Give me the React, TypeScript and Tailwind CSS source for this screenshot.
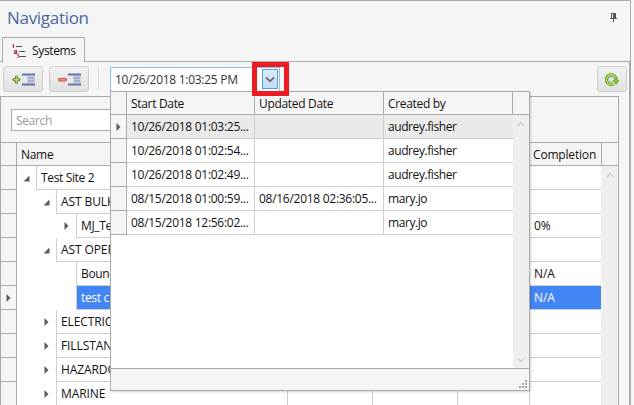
import React from 'react';

const treeRows = [
  { level: 1, label: 'Test Site 2', arrow: 'open', completion: '' },
  { level: 2, label: 'AST BULK', arrow: 'open', completion: '' },
  { level: 3, label: 'MJ_Te', arrow: 'closed', completion: '0%' },
  { level: 2, label: 'AST OPER', arrow: 'open', completion: '' },
  { level: 3, label: 'Bound', arrow: '', completion: 'N/A' },
  { level: 3, label: 'test c', arrow: '', completion: 'N/A', selected: true },
  { level: 2, label: 'ELECTRIC', arrow: 'closed', completion: '' },
  { level: 2, label: 'FILLSTAN', arrow: 'closed', completion: '' },
  { level: 2, label: 'HAZARDO', arrow: 'closed', completion: '' },
  { level: 2, label: 'MARINE', arrow: 'closed', completion: '', last: true },
];

const versions = [
  ['10/26/2018 01:03:25...', '', 'audrey.fisher'],
  ['10/26/2018 01:02:54...', '', 'audrey.fisher'],
  ['10/26/2018 01:02:49...', '', 'audrey.fisher'],
  ['08/15/2018 01:00:59...', '08/16/2018 02:36:05...', 'mary.jo'],
  ['08/15/2018 12:56:02...', '', 'mary.jo'],
];

const indent: Record<number, string> = { 1: 'w-[19px]', 2: 'w-[39px]', 3: 'w-[59px]' };

function Arrow({ kind }: { kind: string }) {
  if (kind === 'open')
    return (
      <svg width="7" height="7" viewBox="0 0 7 7" className="mr-[6px]">
        <path d="M6.5 0.5V6.5H0.5Z" fill="#5c5c5c" />
      </svg>
    );
  if (kind === 'closed')
    return (
      <svg width="5" height="8" viewBox="0 0 5 8" className="mr-[7px]">
        <path d="M0.5 0L4.5 4L0.5 8Z" fill="#5c5c5c" />
      </svg>
    );
  return null;
}

function Chevron({ up, className }: { up?: boolean; className?: string }) {
  return (
    <svg width="8" height="6" viewBox="0 0 8 6" className={className}>
      <path d={up ? 'M0.7 5L4 1.5L7.3 5' : 'M0.7 1L4 4.5L7.3 1'} fill="none" stroke="#d2d2d2" strokeWidth="1.8" />
    </svg>
  );
}

function Lines() {
  return (
    <g>
      <path d="M5 2H13V10H5Z" fill="#c3cae4" />
      <path d="M0 1H13M0 11H13" stroke="#66769f" strokeWidth="2" />
      <path d="M6 4.5H12M6 7.5H12" stroke="#8593bd" strokeWidth="1" />
    </g>
  );
}

function ToolButton({ children, className = 'w-10' }: { children: React.ReactNode; className?: string }) {
  return (
    <div
      className={`flex h-[26px] items-center justify-center rounded-[3px] border border-[#cfcfcf] bg-linear-to-b from-[#f1f1f1] to-[#e0e0e0] ${className}`}
    >
      {children}
    </div>
  );
}

function Popup() {
  return (
    <div className="absolute left-[110px] top-[91px] flex h-[300px] w-[420px] flex-col border border-[#ababab] bg-white shadow-[1px_1px_2px_rgba(0,0,0,0.18)]">
      <div className="flex h-[23px] shrink-0 border-b border-[#ababab] bg-[#f5f5f5] leading-[23px] tracking-[-0.32px]">
        <div className="w-4 border-r border-[#ababab]" />
        <div className="w-32 border-r border-[#ababab] pl-1">Start Date</div>
        <div className="w-[129px] border-r border-[#ababab] pl-1">Updated Date</div>
        <div className="w-[129px] border-r border-[#ababab] pl-1">Created by</div>
      </div>
      <div className="flex flex-1">
        <div className="flex-1">
          {versions.map(([start, updated, by], i) => (
            <div key={start} className={`flex h-6 leading-[24px] ${i === 0 ? 'bg-[#eaeaea]' : ''}`}>
              <div className="flex w-4 items-center justify-center border-r border-b border-[#ababab] bg-[#f5f5f5]">
                {i === 0 && (
                  <svg width="5" height="8" viewBox="0 0 5 8">
                    <path d="M0.5 0L4.5 4L0.5 8Z" fill="#5c5c5c" />
                  </svg>
                )}
              </div>
              <div className="w-32 border-r border-b border-[#cfcfcf] pl-1 tracking-[-0.28px]">{start}</div>
              <div className="w-[129px] border-r border-b border-[#cfcfcf] pl-1 tracking-[-0.28px]">{updated}</div>
              <div className="flex-1 border-b border-[#cfcfcf] pl-1 tracking-[-0.42px]">{by}</div>
            </div>
          ))}
        </div>
        <div className="flex w-4 flex-col items-center justify-between bg-[#efefef] pt-[6px] pb-[5px]">
          <Chevron up />
          <Chevron />
        </div>
      </div>
      <div className="flex h-[22px] items-end justify-end border-t border-[#ababab] bg-[#f5f5f5] pr-[2px] pb-[2px]">
        <svg width="8" height="8" viewBox="0 0 8 8" fill="#a8a8a8">
          <path d="M0 6h2v2H0zM3 6h2v2H3zM6 6h2v2H6zM3 3h2v2H3zM6 3h2v2H6zM6 0h2v2H6z" />
        </svg>
      </div>
    </div>
  );
}

export default function App() {
  return (
    <div className="relative h-[405px] w-[634px] overflow-hidden bg-[#f8f8f8] font-['Open_Sans','Noto_Sans',sans-serif] text-[12px] tracking-[-0.1px] whitespace-nowrap text-[#111]">
      <div className="flex h-[405px] w-[631px] flex-col border-t border-r border-[#ababab] bg-[#f5f5f5]">
        <div className="flex h-9 items-center justify-between pr-[13px] pl-[7px]">
          <h1 className="pb-[2px] text-[17px] leading-[34px] tracking-[-0.3px] text-[#48699f]">Navigation</h1>
          <svg width="7" height="9" viewBox="0 0 7 9" className="mb-[3px]">
            <path d="M1 0H6V5H7V6H4V9H3V6H0V5H1ZM2 1V5H3V1Z" fill="#555" fillRule="evenodd" />
          </svg>
        </div>
        <div className="flex h-[25px] shrink-0 border-b border-[#ababab] pl-[2px]">
          <div className="flex h-[25px] w-[83px] items-center border-x border-t border-[#ababab] bg-[#f5f5f5] pt-[2px] pl-[9px]">
            <svg width="15" height="15" viewBox="0 0 15 15" fill="none">
              <path d="M4 2.5H10M7 7.5H13M7 12.5H14" stroke="#454d69" strokeWidth="1.1" />
              <path d="M0.5 1.5L1.5 1V4M2.3 6.5H4.5V9.5H2.5V8H4.5M6 9.5V12.5M6 13V14" stroke="#b3282d" strokeWidth="1.2" />
            </svg>
            <span className="ml-[5px] tracking-[-0.35px]">Systems</span>
          </div>
        </div>
        <div className="flex h-[34px] shrink-0 items-start border-r border-[#ababab] pt-1 pr-[2px] pl-[3px]">
          <ToolButton>
            <svg width="24" height="13" viewBox="0 0 24 13">
              <path d="M4.5 3.2h2v2.5H9v2H6.500v2.500h-2V7.700H2v-2h2.500z" fill="#b5dc6c" stroke="#67923a" strokeLinejoin="round" />
              <g transform="translate(11 0.5)"><Lines /></g>
            </svg>
          </ToolButton>
          <ToolButton className="ml-[6px] w-10">
            <svg width="24" height="13" viewBox="0 0 24 13">
              <rect x="1.5" y="5.5" width="8" height="2.5" rx="0.5" fill="#f09080" stroke="#ca5549" />
              <g transform="translate(11 0.5)"><Lines /></g>
            </svg>
          </ToolButton>
          <div className="mt-[2px] ml-[9px] h-[22px] w-px bg-[#d8d8d8]" />
          <div className="mt-px ml-[11px] flex h-[25px] w-[170px] justify-between border border-[#8dbfdf] bg-white pr-px pl-1">
            <span className="leading-[23px] tracking-[-0.28px] text-[#333]">10/26/2018 1:03:25 PM</span>
            <div className="mt-px flex h-[20px] w-4 items-center justify-center border border-[#5b9bd8] bg-linear-to-b from-[#dcebfa] to-[#c0ddf7]">
              <svg width="10" height="7" viewBox="0 0 10 7">
                <path d="M1 1.3L5 5.3L9 1.3" fill="none" stroke="#666" strokeWidth="1.7" />
              </svg>
            </div>
          </div>
          <ToolButton className="ml-auto w-[30px]">
            <svg width="14" height="13" viewBox="0 0 14 13" fill="none">
              <path d="M8.5 10.8A4.8 4.8 0 1 1 11 6.5" stroke="#5d9424" strokeWidth="3.2" />
              <path d="M8.5 10.8A4.8 4.8 0 1 1 11 6.5" stroke="#b4df62" strokeWidth="1.6" />
              <path d="M8 8A2.5 2.5 0 1 1 8.5 5.5" stroke="#a8b59c" strokeWidth="0.8" />
              <path d="M9.8 5.5H12.2V7.5H14L11 11.5L8 7.5H9.8Z" fill="#8ecb2f" stroke="#5d9422" strokeWidth="0.6" />
            </svg>
          </ToolButton>
        </div>
        <div className="flex flex-1 border-r border-[#ababab]">
          <div className="flex w-[619px] flex-col border-x border-t border-[#ababab]">
            <div className="h-[45px] px-[10px] pt-3">
              <div className="h-[22px] w-[200px] border border-[#ababab] bg-white pl-1 leading-[21px] tracking-[-0.35px] text-[#999]">Search</div>
            </div>
            <div className="flex h-6 shrink-0 border-y border-[#ababab] leading-[24px]">
              <div className="w-4 border-r border-[#ababab]" />
              <div className="w-[512px] border-r border-[#ababab] pl-1 tracking-[-0.3px]">Name</div>
              <div className="w-[73px] border-r border-[#ababab] pl-[4px] tracking-[-0.18px]">Completion</div>
            </div>
            <div className="flex flex-1">
              <div className="w-[600px] bg-white">
                {treeRows.map((row) => (
                  <div key={row.label} className="flex h-6 leading-[24px]">
                    <div className="flex w-4 items-center justify-center border-r border-b border-[#ababab] bg-[#f5f5f5]">
                      {row.selected && (
                        <svg width="5" height="8" viewBox="0 0 5 8">
                          <path d="M0.5 0L4.5 4L0.5 8Z" fill="#5c5c5c" />
                        </svg>
                      )}
                    </div>
                    <div className={`flex shrink-0 items-center justify-end ${indent[row.level]}`}>
                      <Arrow kind={row.arrow} />
                    </div>
                    <div
                      className={`flex min-w-0 flex-1 overflow-hidden border-l border-[#cfcfcf] ${row.last ? '' : 'border-b'} ${row.selected ? 'bg-[#4285f4] text-white' : ''}`}
                    >
                      <div className={`flex-1 pl-[4px] ${row.level === 2 ? '' : 'tracking-[-0.35px]'}`}>{row.label}</div>
                      <div className="w-[85px] border-l border-[#cfcfcf]" />
                      <div className="w-[85px] border-l border-[#cfcfcf]" />
                      <div className="w-[72px] border-l border-[#cfcfcf]" />
                      <div className="w-[72px] border-l border-[#cfcfcf] pl-[4px] tracking-[-0.1px]">{row.completion}</div>
                    </div>
                  </div>
                ))}
              </div>
              <div className="flex flex-1 justify-center bg-[#efefef] pt-[6px]">
                <Chevron up />
              </div>
            </div>
          </div>
        </div>
      </div>
      <Popup />
      <div className="absolute left-[252px] top-[62px] h-[34px] w-[37px] border-[5px] border-[#ed1c24]" />
    </div>
  );
}
